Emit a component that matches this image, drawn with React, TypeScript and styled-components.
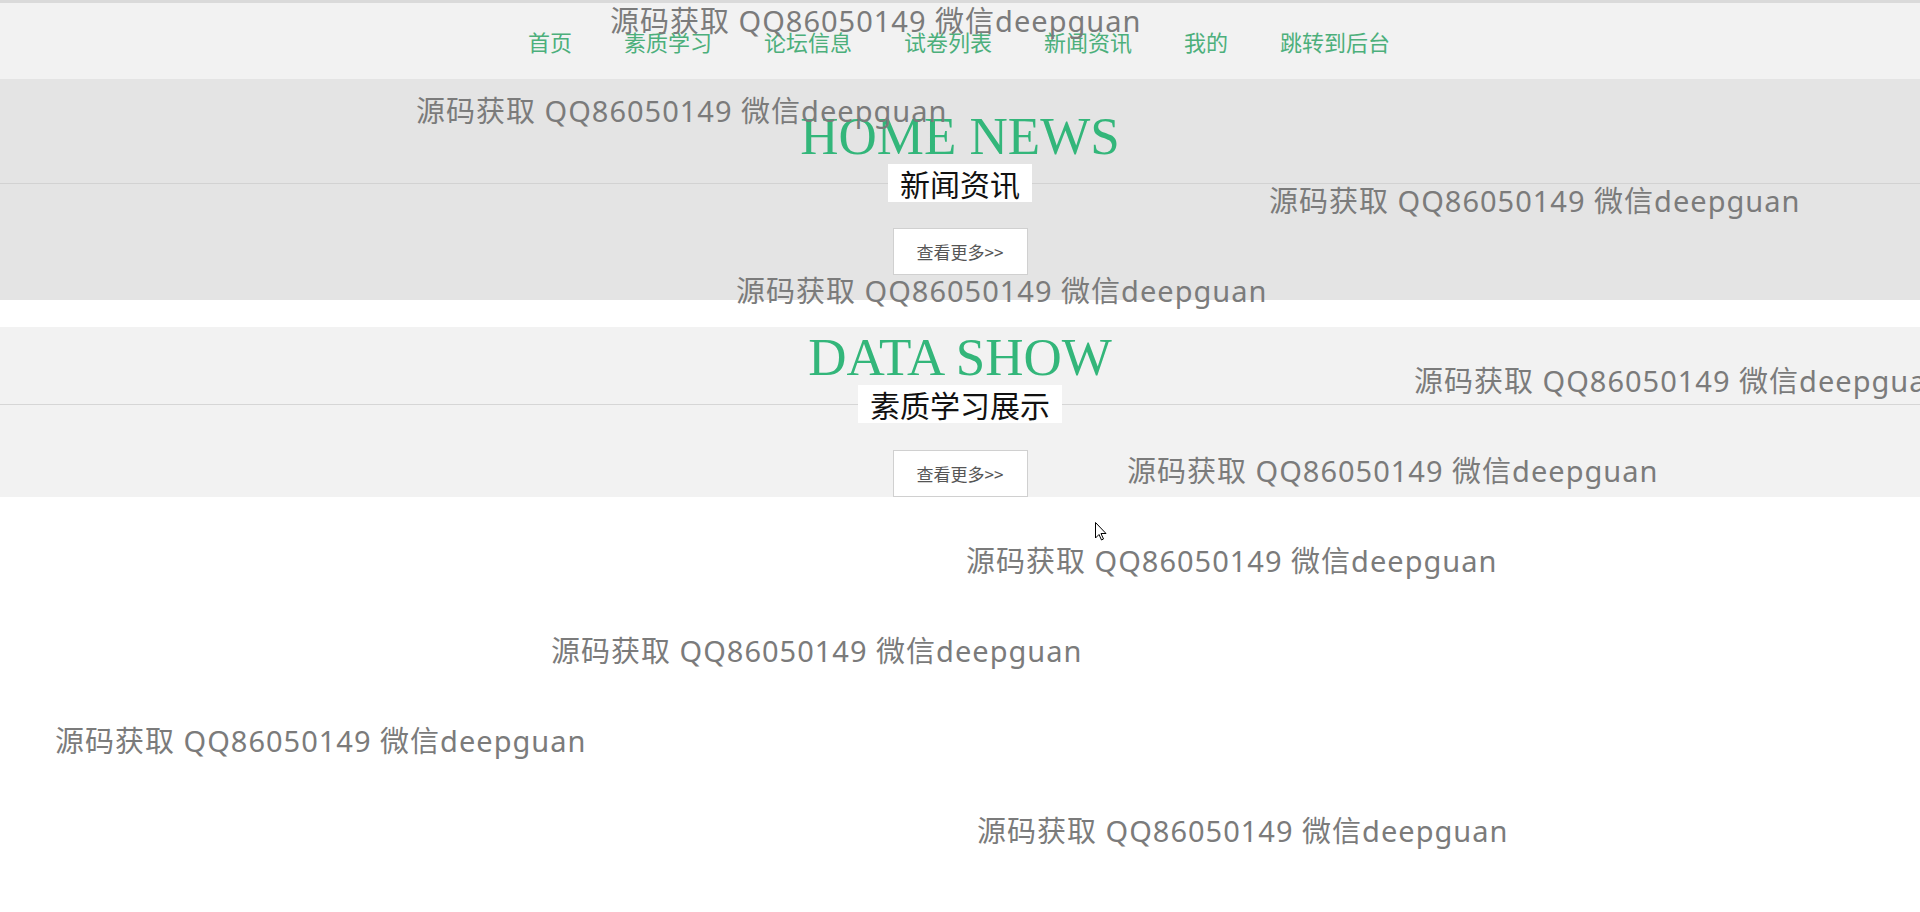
import React from "react";
import styled, { createGlobalStyle } from "styled-components";

const Global = createGlobalStyle`
  html, body { margin: 0; padding: 0; background: #ffffff; overflow: hidden; }
  body { font-family: "Noto Sans", "Noto Sans CJK SC", sans-serif; }
`;

const Page = styled.div`
  position: relative;
  width: 1920px;
  min-height: 912px;
  overflow: hidden;
  background: #ffffff;
`;

const Nav = styled.nav`
  height: 76px;
  border-top: 3px solid #dadada;
  background: #f2f2f2;
  display: flex;
  align-items: center;
  justify-content: center;
`;

const NavList = styled.ul`
  display: flex;
  gap: 52px;
  margin: 0;
  padding: 0;
  list-style: none;
  transform: translateX(-1px);
`;

const NavLink = styled.li`
  font-family: "Noto Sans CJK SC", sans-serif;
  font-size: 22px;
  line-height: 30px;
  color: #4caf7b;
  cursor: pointer;
`;

const Section = styled.section<{ $bg: string; $pt: number; $pb: number; $mt: number }>`
  margin-top: ${(p) => p.$mt}px;
  padding: ${(p) => p.$pt}px 0 ${(p) => p.$pb}px;
  background: ${(p) => p.$bg};
  display: flex;
  flex-direction: column;
  align-items: center;
`;

const Title = styled.h2`
  margin: 0;
  font-family: "Liberation Serif", "Times New Roman", serif;
  font-weight: normal;
  font-size: 53px;
  line-height: 52px;
  color: #33b67a;
  white-space: nowrap;
`;

const Divider = styled.div<{ $line: string }>`
  align-self: stretch;
  margin-top: 2px;
  height: 38px;
  display: flex;
  align-items: center;
  &::before, &::after {
    content: "";
    flex: 1;
    height: 1px;
    background: ${(p) => p.$line};
  }
`;

const Label = styled.span`
  padding: 0 12px;
  height: 38px;
  line-height: 38px;
  background: #ffffff;
  font-family: "Noto Sans CJK SC", sans-serif;
  font-size: 30px;
  color: #111111;
  white-space: nowrap;
`;

const MoreButton = styled.button<{ $mt: number }>`
  margin-top: ${(p) => p.$mt}px;
  width: 135px;
  height: 47px;
  border: 1px solid #d0d0d0;
  background: #ffffff;
  font-family: "Noto Sans CJK SC", sans-serif;
  font-size: 17px;
  color: #555555;
  padding: 0;
  cursor: pointer;
`;

const Watermark = styled.div.attrs<{ $x: number; $y: number }>((p) => ({
  style: { left: p.$x, top: p.$y },
}))<{ $x: number; $y: number }>`
  position: absolute;
  font-family: "Noto Sans", "Noto Sans CJK SC", sans-serif;
  font-size: 29px;
  line-height: 40px;
  letter-spacing: 1px;
  color: #7b7b7b;
  white-space: nowrap;
  pointer-events: none;
`;

const Cursor = styled.svg`
  position: absolute;
  left: 1095px;
  top: 522px;
  width: 12px;
  height: 19px;
`;

const navItems = ["首页", "素质学习", "论坛信息", "试卷列表", "新闻资讯", "我的", "跳转到后台"];

const marks: [number, number][] = [
  [610, 1],
  [416, 91],
  [1269, 181],
  [736, 271],
  [1414, 361],
  [1127, 451],
  [966, 541],
  [551, 631],
  [55, 721],
  [977, 811],
];

export default function App() {
  return (
    <Page>
      <Global />
      <Nav>
        <NavList>
          {navItems.map((n) => (
            <NavLink key={n}>{n}</NavLink>
          ))}
        </NavList>
      </Nav>
      <Section $bg="#e4e4e4" $pt={31} $pb={25} $mt={0}>
        <Title>HOME NEWS</Title>
        <Divider $line="#d2d2d2">
          <Label>新闻资讯</Label>
        </Divider>
        <MoreButton $mt={26}>查看更多&gt;&gt;</MoreButton>
      </Section>
      <Section $bg="#f2f2f2" $pt={4} $pb={0} $mt={27}>
        <Title>DATA SHOW</Title>
        <Divider $line="#d6d6d6">
          <Label>素质学习展示</Label>
        </Divider>
        <MoreButton $mt={27}>查看更多&gt;&gt;</MoreButton>
      </Section>
      {marks.map(([x, y], i) => (
        <Watermark key={i} $x={x} $y={y}>
          源码获取 QQ86050149 微信deepguan
        </Watermark>
      ))}
      <Cursor viewBox="0 0 12 19">
        <path d="M0.5 0.5 L0.5 16 L4 12.5 L6.5 18 L8.5 17 L6 11.5 L11 11.5 Z" fill="#ffffff" stroke="#000000" strokeWidth="1" />
      </Cursor>
    </Page>
  );
}
